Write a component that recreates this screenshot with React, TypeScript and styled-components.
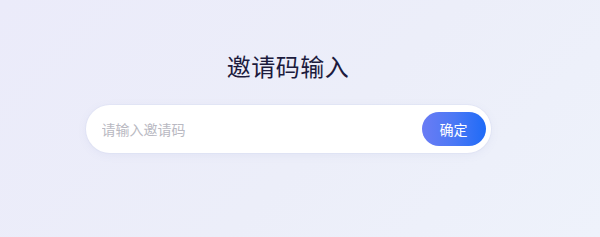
import React from "react";
import styled, { createGlobalStyle } from "styled-components";

const Global = createGlobalStyle`
  html, body { margin: 0; padding: 0; }
  body {
    font-family: "Noto Sans CJK SC", "Noto Sans", sans-serif;
  }
  * { box-sizing: border-box; }
`;

const Page = styled.div`
  width: 600px;
  height: 237px;
  background: linear-gradient(135deg, #ebebfa 0%, #eceef9 55%, #eef2fb 100%);
  display: flex;
  flex-direction: column;
  align-items: center;
  padding: 48px 24px 0 0;
`;

const Title = styled.h1`
  margin: 0;
  font-size: 24px;
  line-height: 36px;
  font-weight: 400;
  color: #1c1b3d;
  letter-spacing: 0.5px;
`;

const Bar = styled.form`
  margin-top: 21px;
  width: 405px;
  height: 48px;
  background: #ffffff;
  border-radius: 24px;
  box-shadow: 0 2px 10px rgba(120, 130, 190, 0.08), 0 0 0 1px rgba(225, 228, 245, 0.6);
  display: flex;
  align-items: center;
  padding: 0 5px 0 14px;
`;

const Input = styled.input`
  flex: 1;
  border: none;
  outline: none;
  background: transparent;
  font-family: inherit;
  font-size: 14px;
  color: #333;
  &::placeholder {
    color: #b9b9c2;
  }
`;

const Button = styled.button`
  width: 64px;
  height: 34px;
  border: none;
  border-radius: 17px;
  background: linear-gradient(90deg, #6a7cf4 0%, #4b78f5 50%, #1f6bf7 100%);
  color: #ffffff;
  font-family: inherit;
  font-size: 14px;
  cursor: pointer;
`;

export default function App() {
  return (
    <>
      <Global />
      <Page>
        <Title>邀请码输入</Title>
        <Bar onSubmit={(e) => e.preventDefault()}>
          <Input placeholder="请输入邀请码" />
          <Button type="submit">确定</Button>
        </Bar>
      </Page>
    </>
  );
}
